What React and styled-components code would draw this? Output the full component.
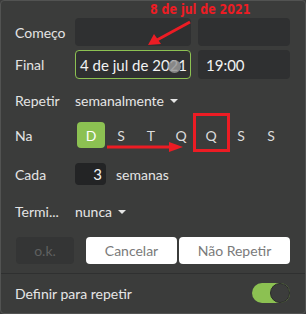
import React from 'react';
import styled, { createGlobalStyle } from 'styled-components';

const GlobalStyle = createGlobalStyle`
  html, body {
    margin: 0;
    padding: 0;
    background: #3b3c3b;
  }
  body {
    font-family: Lato, "Open Sans", sans-serif;
  }
`;

const Panel = styled.div`
  position: relative;
  box-sizing: border-box;
  width: 306px;
  height: 314px;
  background: #3b3c3b;
  border: 1px solid #525352;
  border-radius: 4px;
  padding: 17px 15px 0 14px;
  color: #e2e2e2;
  font-size: 14px;
  overflow: hidden;
`;

const Row = styled.div`
  display: flex;
  align-items: center;
  height: ${(p) => p.$h}px;
  margin-top: ${(p) => p.$mt || 0}px;
`;

const Label = styled.div`
  width: 60px;
  flex: 0 0 60px;
  color: #e4e4e4;
  white-space: nowrap;
`;

const Field = styled.div`
  position: relative;
  box-sizing: border-box;
  display: flex;
  align-items: center;
  width: ${(p) => p.$w}px;
  height: 100%;
  margin-left: ${(p) => p.$ml || 0}px;
  padding: 0 ${(p) => p.$pad ?? 7}px;
  background: ${(p) => p.$bg || '#2f3031'};
  border: 1px solid ${(p) => (p.$focus ? '#8cc152' : 'transparent')};
  border-radius: 4px;
  color: #f2f2f2;
  font-size: 15px;
  justify-content: ${(p) => (p.$right ? 'flex-end' : 'flex-start')};
  white-space: nowrap;
  overflow: hidden;
`;

const ClearDot = styled.span`
  position: absolute;
  right: 9px;
  top: 50%;
  width: 13px;
  height: 13px;
  margin-top: -5px;
  border-radius: 50%;
  background: rgba(150, 150, 150, 0.85);
`;

const Select = styled.div`
  display: flex;
  align-items: center;
  gap: 6px;
  color: #e6e6e6;
  &::after {
    content: '';
    border-left: 4px solid transparent;
    border-right: 4px solid transparent;
    border-top: 4px solid #e6e6e6;
    margin-top: 2px;
  }
`;

const Days = styled.div`
  display: flex;
  height: 100%;
  margin-left: 1px;
`;

const Day = styled.div`
  position: relative;
  width: 30px;
  display: flex;
  align-items: center;
  justify-content: center;
  color: #dcdcdc;
  font-size: 14px;
  &::before {
    content: '';
    display: ${(p) => (p.$active ? 'block' : 'none')};
    position: absolute;
    left: 1px;
    right: 1px;
    top: 0;
    bottom: 0;
    background: #8cc152;
    border-radius: 4px;
    z-index: 0;
  }
  &::after {
    content: '';
    display: ${(p) => (p.$marked ? 'block' : 'none')};
    position: absolute;
    left: -3px;
    right: -4px;
    top: -9px;
    bottom: -4px;
    border: 3px solid #ec1c24;
  }
  span {
    position: relative;
    z-index: 1;
    color: ${(p) => (p.$active ? '#ffffff' : '#dcdcdc')};
  }
`;

const Unit = styled.span`
  margin-left: 10px;
  color: #e4e4e4;
`;

const Buttons = styled.div`
  display: flex;
  height: 27px;
  margin-top: 16px;
  margin-left: 1px;
`;

const Button = styled.div`
  box-sizing: border-box;
  width: ${(p) => p.$w}px;
  margin-left: ${(p) => p.$ml || 0}px;
  display: flex;
  align-items: center;
  justify-content: center;
  border-radius: 4px;
  background: ${(p) => (p.$dim ? '#343535' : '#ffffff')};
  color: ${(p) => (p.$dim ? '#5f6060' : '#7a7a7a')};
  font-size: 14px;
`;

const Divider = styled.div`
  height: 1px;
  background: #2f3030;
  margin: 9px -15px 0 -14px;
`;

const Footer = styled.div`
  display: flex;
  align-items: center;
  justify-content: space-between;
  height: 30px;
  margin-top: 4px;
  color: #e6e6e6;
`;

const Toggle = styled.div`
  position: relative;
  width: 38px;
  height: 20px;
  border-radius: 10px;
  background: #8cc152;
  &::after {
    content: '';
    position: absolute;
    right: 0;
    top: 0;
    box-sizing: border-box;
    width: 20px;
    height: 20px;
    border-radius: 50%;
    background: #3c3d3c;
    border: 1px solid #2a2b2a;
  }
`;

const Note = styled.div`
  position: absolute;
  left: 149px;
  top: 0;
  color: #ec1c24;
  font-family: "DejaVu Sans Condensed", "DejaVu Sans", sans-serif;
  font-weight: bold;
  font-size: 14px;
  white-space: nowrap;
  transform: scaleX(0.88);
  transform-origin: left center;
`;

const Overlay = styled.svg`
  position: absolute;
  left: 0;
  top: 0;
  pointer-events: none;
`;

const days = ['D', 'S', 'T', 'Q', 'Q', 'S', 'S'];

export default function App() {
  return (
    <>
      <GlobalStyle />
      <Panel>
        <Row $h={28}>
          <Label>Começo</Label>
          <Field $w={116} />
          <Field $w={92} $ml={7} />
        </Row>
        <Row $h={29} $mt={4}>
          <Label>Final</Label>
          <Field $w={116} $focus $pad={4}>
            4 de jul de 2021
            <ClearDot />
          </Field>
          <Field $w={92} $ml={7}>19:00</Field>
        </Row>
        <Row $h={20} $mt={11}>
          <Label>Repetir</Label>
          <Select>semanalmente</Select>
        </Row>
        <Row $h={26} $mt={12}>
          <Label>Na</Label>
          <Days>
            {days.map((d, i) => (
              <Day key={i} $active={i === 0} $marked={i === 4}>
                <span>{d}</span>
              </Day>
            ))}
          </Days>
        </Row>
        <Row $h={22} $mt={15}>
          <Label>Cada</Label>
          <Field $w={31} $bg="#232425" $right $pad={3}>3</Field>
          <Unit>semanas</Unit>
        </Row>
        <Row $h={20} $mt={16}>
          <Label>Termi...</Label>
          <Select>nunca</Select>
        </Row>
        <Buttons>
          <Button $w={58} $dim>o.k.</Button>
          <Button $w={91} $ml={12}>Cancelar</Button>
          <Button $w={111} $ml={2}>Não Repetir</Button>
        </Buttons>
        <Divider />
        <Footer>
          <span>Definir para repetir</span>
          <Toggle />
        </Footer>
        <Note>8 de jul de 2021</Note>
        <Overlay width="306" height="314" viewBox="0 0 306 314">
          <line x1="189" y1="21" x2="156" y2="39" stroke="#ec1c24" strokeWidth="3" />
          <polygon points="147,44 153,33 160,43" fill="#ec1c24" />
          <line x1="106" y1="146" x2="170" y2="146" stroke="#ec1c24" strokeWidth="3" />
          <polygon points="182,146 168,141 168,151" fill="#ec1c24" />
        </Overlay>
      </Panel>
    </>
  );
}
